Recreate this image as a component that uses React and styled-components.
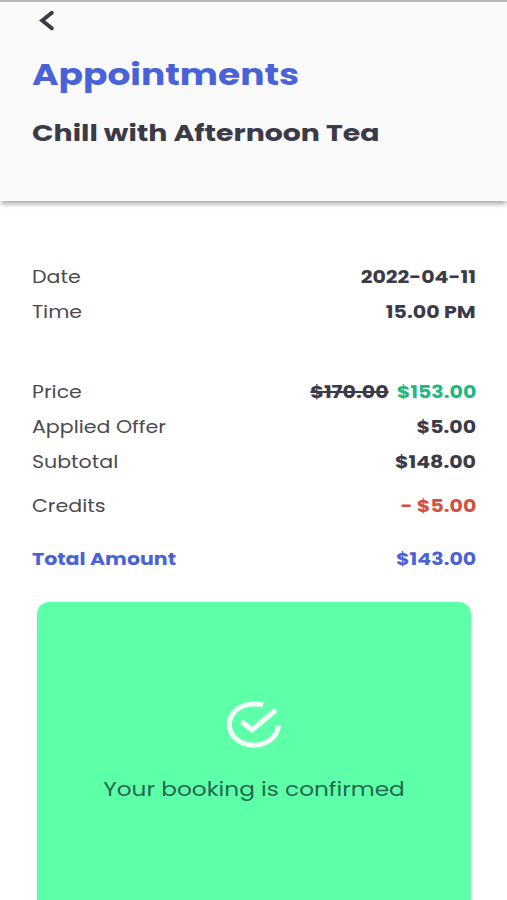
import React from "react"
import styled, { createGlobalStyle, ThemeProvider } from "styled-components"

const theme = {
  colors: {
    primary: "#4a62d8",
    text: "#3b3a48",
    label: "#4b4a50",
    success: "#1fb880",
    danger: "#d5503f",
    header: "#fafafa",
    confirmed: "#5effa9",
  },
}

const GlobalStyle = createGlobalStyle`
  * {
    box-sizing: border-box;
  }
  body {
    margin: 0;
    background: #fff;
    font-family: Poppins, Inter, "Open Sans", sans-serif;
    font-feature-settings: "cv11";
    overflow: hidden;
  }
`

const Screen = styled.div`
  display: flex;
  flex-direction: column;
  width: 507px;
  height: 900px;
  overflow: hidden;
`

const Header = styled.header`
  height: 201px;
  flex-shrink: 0;
  padding: 8px 32px 0;
  border-top: 2px solid #b6b6b6;
  background: ${(props) => props.theme.colors.header};
  box-shadow: 0 4px 5px -1px rgba(0, 0, 0, 0.34);
`

const BackButton = styled.button`
  display: block;
  margin: 0 0 0 6px;
  padding: 0;
  border: 0;
  background: none;
  line-height: 0;
`

// wide lettering, scaled from the edge the text is aligned to
const Wide = styled.span`
  display: inline-block;
  white-space: pre;
  transform: scaleX(${(props) => props.$wide || 1.142});
  transform-origin: ${(props) => props.$from || "left"} center;
`

const Title = styled.h1`
  margin: 23px 0 0;
  font-size: 30px;
  font-weight: 700;
  line-height: 40px;
  color: ${(props) => props.theme.colors.primary};
`

const Subtitle = styled.h2`
  margin: 23px 0 0;
  font-size: 23px;
  font-weight: 700;
  line-height: 30px;
  color: ${(props) => props.theme.colors.text};
`

const Details = styled.dl`
  margin: 0;
  padding: 58px 31px 0 32px;
`

const Row = styled.div`
  display: flex;
  justify-content: space-between;
  align-items: center;
  height: 35px;
  margin-top: ${(props) => props.$gap || 0}px;
  font-size: 18px;
  color: ${(props) =>
    props.$total ? props.theme.colors.primary : props.theme.colors.label};
  font-weight: ${(props) => (props.$total ? 700 : 400)};
`

const Label = styled.dt``

const Value = styled.dd`
  margin: 0;
  font-weight: 700;
  color: ${(props) => props.theme.colors[props.$tone || "text"]};
`

const OldPrice = styled.s`
  margin-right: 7px;
  color: ${(props) => props.theme.colors.text};
  text-decoration-thickness: 1.5px;
`

const Confirmation = styled.section`
  display: flex;
  flex-direction: column;
  align-items: center;
  flex: 1;
  margin: 26px 36px 0 37px;
  padding-top: 98px;
  border-radius: 12px 12px 0 0;
  background: ${(props) => props.theme.colors.confirmed};
`

const Message = styled.p`
  margin: 24px 0 0;
  font-size: 20px;
  line-height: 30px;
  color: #23694f;
`

const rows = [
  { label: "Date", value: "2022-04-11" },
  { label: "Time", value: "15.00 PM" },
  { label: "Price", value: "$153.00", old: "$170.00", tone: "success", gap: 45 },
  { label: "Applied Offer", value: "$5.00" },
  { label: "Subtotal", value: "$148.00" },
  { label: "Credits", value: "- $5.00", tone: "danger", gap: 9 },
  { label: "Total Amount", value: "$143.00", tone: "primary", gap: 18, total: true },
]

const App = () => {
  return (
    <ThemeProvider theme={theme}>
      <GlobalStyle />
      <Screen>
        <Header>
          <BackButton aria-label="Back">
            <svg width="18" height="22" viewBox="0 0 18 22" fill="none">
              <path
                d="M13.8 2.8 L4.2 10.5 L13.8 18.2"
                stroke="#3b3a40"
                strokeWidth="3.9"
                strokeLinecap="round"
              />
            </svg>
          </BackButton>
          <Title>
            <Wide $wide={1.2}>Appointments</Wide>
          </Title>
          <Subtitle>
            <Wide $wide={1.233}>Chill with Afternoon Tea</Wide>
          </Subtitle>
        </Header>
        <Details>
          {rows.map(({ label, value, old, tone, gap, total }) => (
            <Row key={label} $gap={gap} $total={total}>
              <Label>
                <Wide>{label}</Wide>
              </Label>
              <Value $tone={tone}>
                <Wide $from="right">
                  {old && <OldPrice>{old}</OldPrice>}
                  {value}
                </Wide>
              </Value>
            </Row>
          ))}
        </Details>
        <Confirmation>
          <svg width="56" height="50" viewBox="0 0 56 50" fill="none">
            <g stroke="#f1fff7" strokeWidth="5">
              <path d="M37 5 C34 4.2 31 4 28 4 C14 4 3.4 13 3.4 24.5 C3.4 36 14 45.2 28 45.2 C41 45.2 51.500 37 52.500 25.500" />
              <path d="M15.500 21.500 L26 30 L50 10" />
            </g>
          </svg>
          <Message>
            <Wide $from="center" $wide={1.16}>Your booking is confirmed</Wide>
          </Message>
        </Confirmation>
      </Screen>
    </ThemeProvider>
  )
}

export default App
